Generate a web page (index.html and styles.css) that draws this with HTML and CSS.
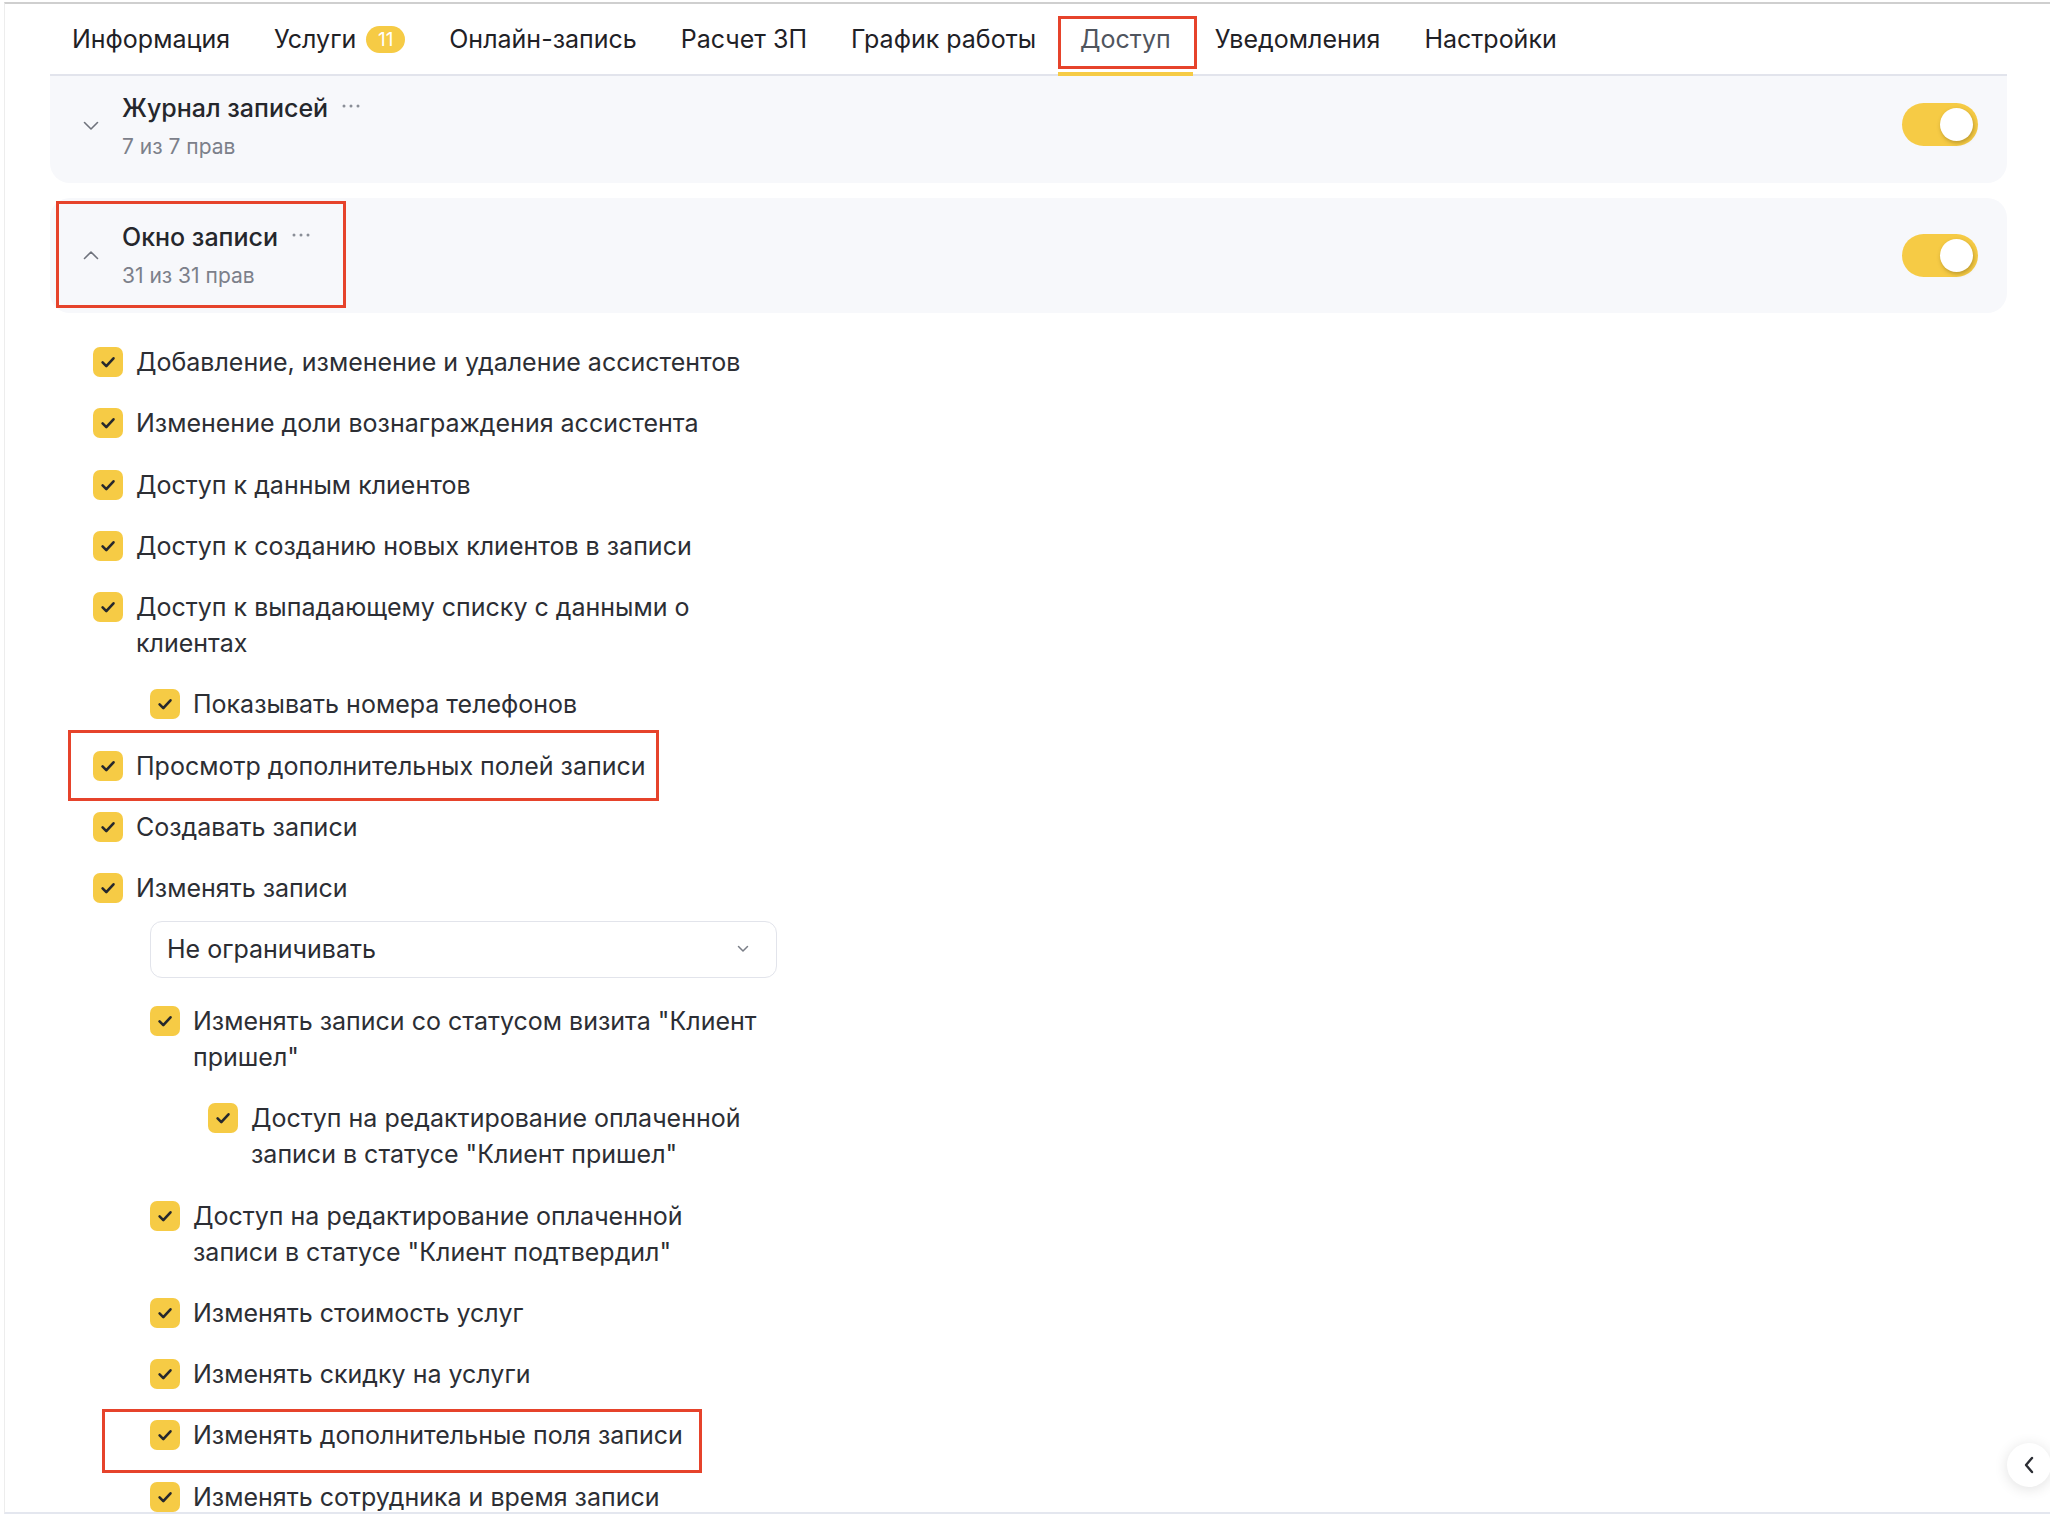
FILE: index.html
```html
<!DOCTYPE html>
<html lang="ru">
<head>
    <meta charset="UTF-8">
    <meta name="viewport" content="width=device-width, initial-scale=1.0">
    <title>Доступ - настройки сотрудника</title>
    <link rel="stylesheet" href="styles.css">
</head>
<body>
    <div class="window">
        <nav class="tabs">
            <a class="tab" href="#">Информация</a>
            <a class="tab" href="#">Услуги <span class="badge">11</span></a>
            <a class="tab" href="#">Онлайн-запись</a>
            <a class="tab" href="#">Расчет ЗП</a>
            <a class="tab" href="#">График работы</a>
            <a class="tab active" href="#">Доступ</a>
            <a class="tab" href="#">Уведомления</a>
            <a class="tab" href="#">Настройки</a>
        </nav>

        <!-- Группы прав -->
        <section class="group group-first">
            <svg class="chevron" width="16" height="10" viewBox="0 0 16 10"><path d="M1.5 1.5l6.5 6.5 6.5-6.5" fill="none" stroke="#6f737c" stroke-width="1.6" stroke-linecap="round" stroke-linejoin="round"/></svg>
            <div class="group-info">
                <div class="group-title">Журнал записей <svg class="dots" width="18" height="4" viewBox="0 0 18 4"><circle cx="2" cy="2" r="1.5"/><circle cx="9" cy="2" r="1.5"/><circle cx="16" cy="2" r="1.5"/></svg></div>
                <div class="group-count">7 из 7 прав</div>
            </div>
            <span class="toggle"><span class="knob"></span></span>
        </section>

        <section class="group group-open">
            <svg class="chevron" width="16" height="10" viewBox="0 0 16 10"><path d="M1.5 8.5l6.5-6.5 6.5 6.5" fill="none" stroke="#6f737c" stroke-width="1.6" stroke-linecap="round" stroke-linejoin="round"/></svg>
            <div class="group-info">
                <div class="group-title">Окно записи <svg class="dots" width="18" height="4" viewBox="0 0 18 4"><circle cx="2" cy="2" r="1.5"/><circle cx="9" cy="2" r="1.5"/><circle cx="16" cy="2" r="1.5"/></svg></div>
                <div class="group-count">31 из 31 прав</div>
            </div>
            <span class="toggle"><span class="knob"></span></span>
        </section>

        <ul class="rights">
            <li class="right"><span class="check"></span><span class="label">Добавление, изменение и удаление ассистентов</span></li>
            <li class="right"><span class="check"></span><span class="label">Изменение доли вознаграждения ассистента</span></li>
            <li class="right"><span class="check"></span><span class="label">Доступ к данным клиентов</span></li>
            <li class="right"><span class="check"></span><span class="label">Доступ к созданию новых клиентов в записи</span></li>
            <li class="right"><span class="check"></span><span class="label">Доступ к выпадающему списку с данными о клиентах</span></li>
            <li class="right level-1"><span class="check"></span><span class="label">Показывать номера телефонов</span></li>
            <li class="right marked marked-view"><span class="check"></span><span class="label">Просмотр дополнительных полей записи</span></li>
            <li class="right"><span class="check"></span><span class="label">Создавать записи</span></li>
            <li class="right"><span class="check"></span><span class="label">Изменять записи</span></li>
            <li class="select level-1">
                <span>Не ограничивать</span>
                <svg width="12" height="8" viewBox="0 0 12 8"><path d="M1.5 1.5l4.5 4.5 4.5-4.5" fill="none" stroke="#7a7e87" stroke-width="1.5" stroke-linecap="round" stroke-linejoin="round"/></svg>
            </li>
            <li class="right level-1"><span class="check"></span><span class="label">Изменять записи со статусом визита "Клиент пришел"</span></li>
            <li class="right level-2"><span class="check"></span><span class="label">Доступ на редактирование оплаченной записи в статусе "Клиент пришел"</span></li>
            <li class="right level-1"><span class="check"></span><span class="label">Доступ на редактирование оплаченной записи в статусе "Клиент подтвердил"</span></li>
            <li class="right level-1"><span class="check"></span><span class="label">Изменять стоимость услуг</span></li>
            <li class="right level-1"><span class="check"></span><span class="label">Изменять скидку на услуги</span></li>
            <li class="right level-1 marked marked-edit"><span class="check"></span><span class="label">Изменять дополнительные поля записи</span></li>
            <li class="right level-1"><span class="check"></span><span class="label">Изменять сотрудника и время записи</span></li>
        </ul>

        <button class="collapse">
            <svg width="12" height="18" viewBox="0 0 12 18"><path d="M9 2L3 9l6 7" fill="none" stroke="#2b2d33" stroke-width="2.4" stroke-linecap="round" stroke-linejoin="round"/></svg>
        </button>
    </div>
</body>
</html>
```

FILE: styles.css
```css
/* Global styles */
body {
    margin: 0;
    padding: 0;
    background-color: #fff;
    font-family: Inter, "Noto Sans", sans-serif;
    color: #2a2c32;
}

.window {
    position: relative;
    margin: 2px 0 0 4px;
    height: 1512px;
    padding: 0 43px 0 45px;
    box-sizing: border-box;
    border-top: 2px solid #cfcfcf;
    border-bottom: 2px solid #e4e7ef;
    border-left: 1px solid #ededed;
    overflow: hidden;
}

/* Tabs */
.tabs {
    display: flex;
    height: 70px;
    border-bottom: 2px solid #e2e4ec;
}

.tab {
    position: relative;
    display: flex;
    align-items: center;
    padding: 0 22px;
    font-size: 25px;
    color: #1f2126;
    text-decoration: none;
}

.tab.active {
    color: #50555e;
}

.tab.active::before {
    content: "";
    position: absolute;
    left: 0;
    right: 0;
    bottom: -2px;
    height: 4px;
    background-color: #f6cb45;
}

/* red annotation frames */
.tab.active::after,
.marked::after,
.group-open::after {
    content: "";
    position: absolute;
    box-sizing: border-box;
    border: 3px solid #e6432b;
    pointer-events: none;
}

.tab.active::after {
    top: 12px;
    bottom: 5px;
    left: 0;
    right: -4px;
}

.badge {
    display: inline-block;
    margin-left: 10px;
    min-width: 39px;
    height: 27px;
    line-height: 27px;
    border-radius: 14px;
    background-color: #f6cb45;
    color: #fff;
    font-size: 19px;
    text-align: center;
}

/* Groups */
.group {
    position: relative;
    display: flex;
    align-items: center;
    padding: 21px 29px 22px 33px;
    background-color: #f7f8fb;
    border-radius: 20px;
}

.group-first {
    padding-top: 14px;
    padding-bottom: 21px;
    border-radius: 0 0 20px 20px;
}

.group-first .toggle {
    margin-top: -3px;
}

.group-open {
    margin-top: 15px;
}

.group-open::after {
    top: 3px;
    left: 6px;
    width: 290px;
    height: 107px;
}

.chevron {
    flex-shrink: 0;
    margin-right: 23px;
}

.group-info {
    flex: 1;
}

.group-title {
    display: flex;
    align-items: center;
    font-size: 25px;
    font-weight: 500;
    line-height: 36px;
    color: #25272c;
}

.dots {
    margin: -4px 0 0 14px;
    fill: #8a8e97;
}

.group-count {
    margin-top: 6px;
    font-size: 21px;
    line-height: 30px;
    color: #7c808a;
}

.toggle {
    position: relative;
    width: 76px;
    height: 43px;
    border-radius: 22px;
    background-color: #f6cb45;
}

.knob {
    position: absolute;
    top: 5px;
    right: 5px;
    width: 33px;
    height: 33px;
    border-radius: 50%;
    background-color: #fff;
    box-shadow: 1px 2px 4px rgba(80, 60, 0, 0.35);
}

/* Rights list */
.rights {
    list-style: none;
    margin: 31px 0 0 43px;
    padding: 0;
    width: 677px;
    display: flex;
    flex-direction: column;
    gap: 25.3px;
}

.right {
    position: relative;
    display: flex;
    align-items: flex-start;
    font-size: 25px;
    line-height: 36px;
    color: #2c2e34;
}

.level-1 {
    margin-left: 57px;
}

.level-2 {
    margin-left: 115px;
}

.check {
    flex-shrink: 0;
    width: 30px;
    height: 30px;
    margin: 3px 13px 0 0;
    border-radius: 7px;
    background: #f6cb45 url("data:image/svg+xml,%3Csvg xmlns='http://www.w3.org/2000/svg' width='30' height='30' viewBox='0 0 30 30'%3E%3Cpath d='M9.6 15.4l3.7 3.7 7.2-7.8' fill='none' stroke='%2326282d' stroke-width='2.6' stroke-linecap='round' stroke-linejoin='round'/%3E%3C/svg%3E") center no-repeat;
}

.marked {
    width: fit-content;
}

.marked-view::after {
    top: -18px;
    bottom: -17px;
    left: -25px;
    right: -13px;
}

.marked-edit::after {
    top: -8px;
    bottom: -20px;
    left: -48px;
    right: -19px;
}

.select {
    display: flex;
    align-items: center;
    justify-content: space-between;
    margin-top: -11px;
    width: 627px;
    height: 57px;
    padding: 0 27px 0 16px;
    box-sizing: border-box;
    border: 1px solid #e2e4eb;
    border-radius: 12px;
    font-size: 25px;
    color: #2a2c32;
}

.collapse {
    position: absolute;
    top: 1439px;
    right: -1px;
    width: 44px;
    height: 44px;
    padding: 0;
    border: none;
    border-radius: 50%;
    background-color: #fff;
    box-shadow: 0 2px 14px rgba(0, 0, 0, 0.12);
    display: flex;
    align-items: center;
    justify-content: center;
    cursor: pointer;
}
```
